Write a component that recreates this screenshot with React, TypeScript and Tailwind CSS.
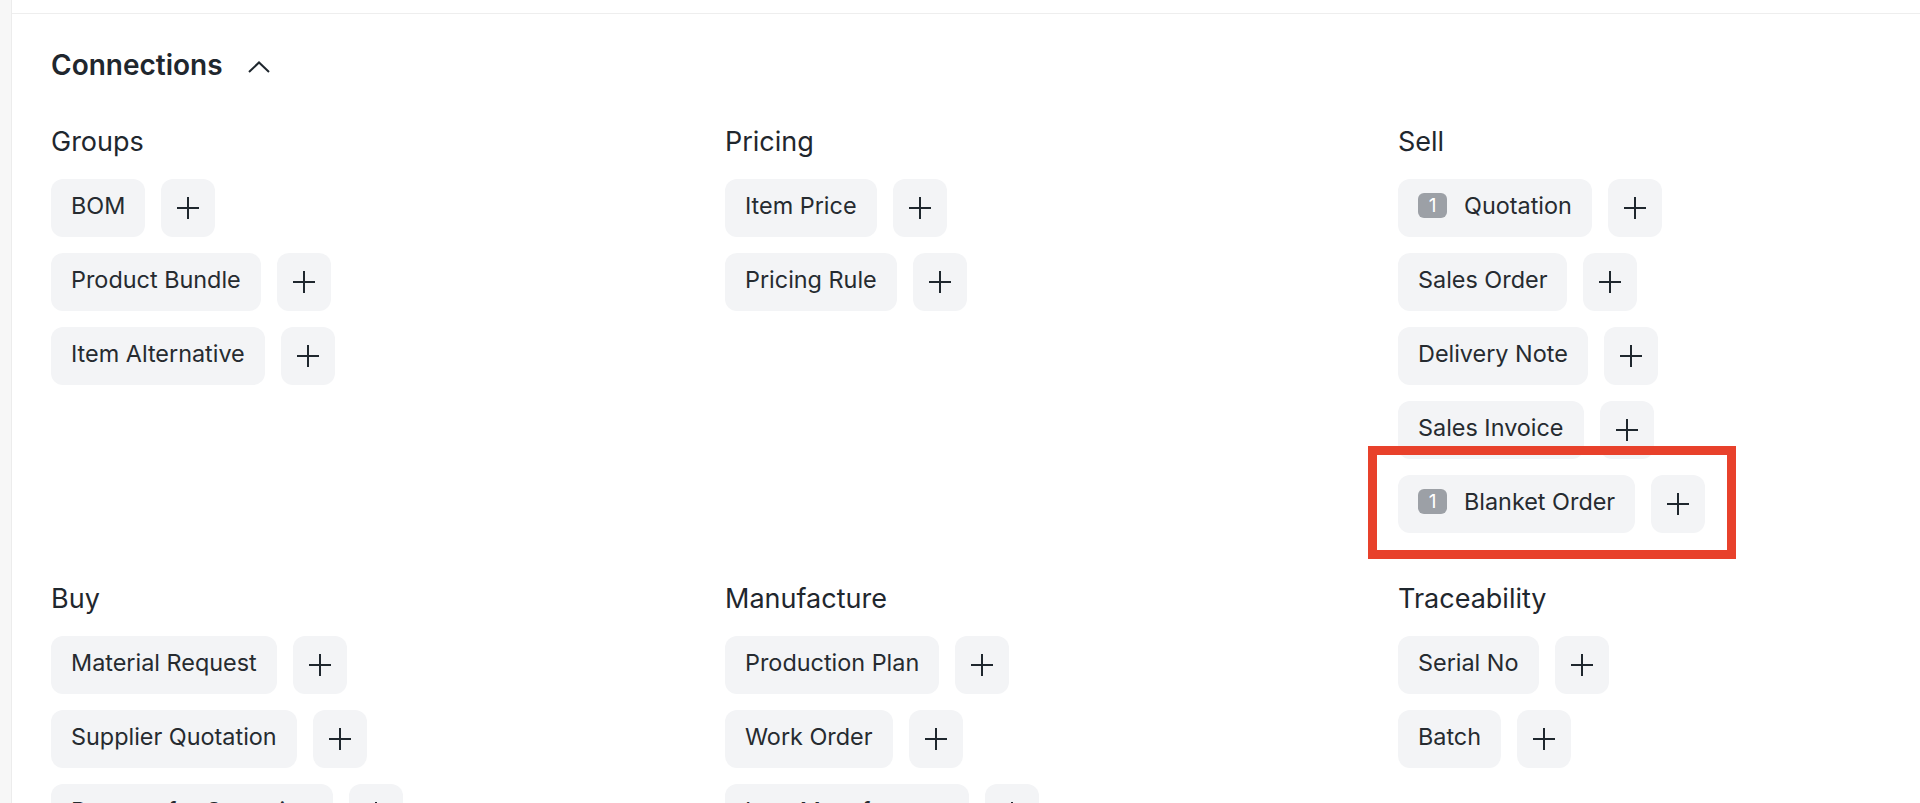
type Link = { label: string; count?: number };
type Group = { title: string; links: Link[] };

const groups: Group[] = [
  {
    title: 'Groups',
    links: [{ label: 'BOM' }, { label: 'Product Bundle' }, { label: 'Item Alternative' }],
  },
  {
    title: 'Pricing',
    links: [{ label: 'Item Price' }, { label: 'Pricing Rule' }],
  },
  {
    title: 'Sell',
    links: [
      { label: 'Quotation', count: 1 },
      { label: 'Sales Order' },
      { label: 'Delivery Note' },
      { label: 'Sales Invoice' },
      { label: 'Blanket Order', count: 1 },
    ],
  },
  {
    title: 'Buy',
    links: [
      { label: 'Material Request' },
      { label: 'Supplier Quotation' },
      { label: 'Request for Quotation' },
    ],
  },
  {
    title: 'Manufacture',
    links: [{ label: 'Production Plan' }, { label: 'Work Order' }, { label: 'Item Manufacturer' }],
  },
  {
    title: 'Traceability',
    links: [{ label: 'Serial No' }, { label: 'Batch' }],
  },
];

function PlusIcon() {
  return (
    <svg width="22" height="22" viewBox="0 0 22 22" fill="none">
      <path d="M11 0V22M0 11H22" stroke="#1f272e" strokeWidth="2" />
    </svg>
  );
}

function LinkRow({ link, highlight }: { link: Link; highlight?: boolean }) {
  return (
    <div className="relative flex items-center gap-[16px] self-start">
      <div className="flex h-[58px] items-center gap-[17px] rounded-[12px] bg-[#f3f4f6] px-[20px] pb-[5px] text-[23.4px] text-[#262b30]">
        {link.count !== undefined && (
          <span className="flex h-[25px] w-[29px] items-center justify-center rounded-[6px] bg-[#9ca0a6] text-[19px] leading-none text-white">
            {link.count}
          </span>
        )}
        <span>{link.label}</span>
      </div>
      <button className="flex h-[58px] w-[54px] items-center justify-center rounded-[12px] bg-[#f3f4f6]">
        <PlusIcon />
      </button>
      {highlight && (
        <div className="pointer-events-none absolute left-[-30px] top-[-29px] h-[113px] w-[368px] border-[9px] border-[#e8412b]" />
      )}
    </div>
  );
}

export default function App() {
  return (
    <div
      className="h-[803px] overflow-hidden bg-[#f7f7f7] pl-[11px]"
      style={{ fontFamily: 'Inter, "Noto Sans", sans-serif' }}
    >
      <div className="h-full border-l border-[#ececec] bg-white pt-[13px]">
        <div className="border-t border-[#eeeeee] pl-[39px] pt-[33px]">
          {/* Header */}
          <div className="flex items-center gap-[25px]">
            <h2 className="text-[28px] font-semibold leading-[36px] text-[#1f272e]">Connections</h2>
            <svg width="22" height="12" viewBox="0 0 22 12" fill="none" className="mt-[3px]">
              <path d="M1 11L11 1.5L21 11" stroke="#1f272e" strokeWidth="2" />
            </svg>
          </div>

          {/* Groups */}
          <div className="mt-[41px] grid grid-cols-[674px_673px_673px] gap-y-[48px]">
            {groups.map((group) => (
              <div key={group.title} className="flex flex-col">
                <h3 className="text-[27px] font-normal leading-[36px] text-[#1f272e]">{group.title}</h3>
                <div className="mt-[19px] flex flex-col gap-[16px]">
                  {group.links.map((link) => (
                    <LinkRow key={link.label} link={link} highlight={link.label === 'Blanket Order'} />
                  ))}
                </div>
              </div>
            ))}
          </div>
        </div>
      </div>
    </div>
  );
}
